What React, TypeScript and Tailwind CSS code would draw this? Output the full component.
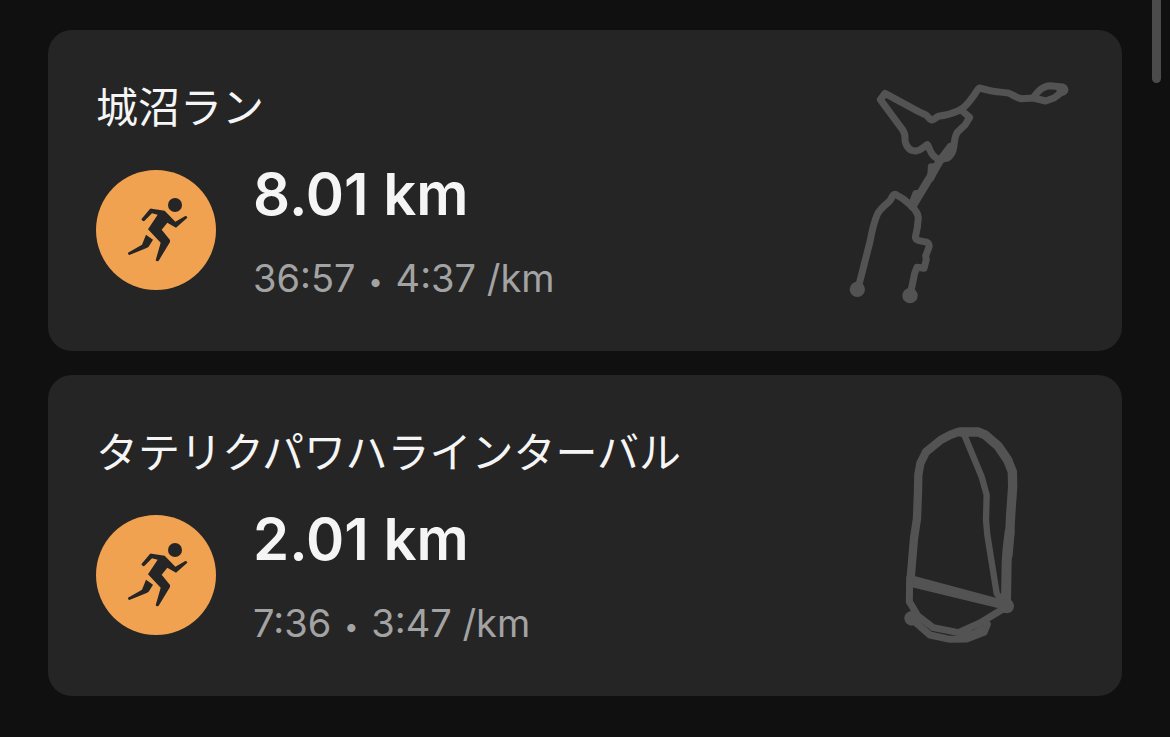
import type { ReactNode } from 'react';

interface Activity {
  id: number;
  title: string;
  distance: string;
  duration: string;
  pace: string;
  route: ReactNode;
}

const LakeRoute = () => (
  <svg viewBox="0 0 720 720" className="h-60 w-60 shrink-0 text-[#535353]" fill="none" stroke="currentColor" strokeWidth="21" strokeLinecap="round" strokeLinejoin="round" aria-hidden="true">
    <path d="M580 82C595 64 607 48 630 47L668 51L674 60L642 84L617 93L580 84L545 86C528 84 518 73 505 69C485 66 465 66 450 62L418 54C410 59 408 70 396 84C380 107 366 118 352 124C330 134 314 137 295 139C286 142 284 149 275 150C267 148 266 140 258 135L236 125L135 70L121 89L187 178C196 190 195 196 195 212C200 234 212 243 228 243C245 240 252 229 262 224C268 232 269 244 277 253C284 262 292 268 303 268" />
    <path d="M362 119L389 142L375 165L352 187C344 198 344 210 342 227C340 246 334 258 322 264L303 268" />
    <path d="M332 230L300 272L217 410" strokeWidth="24" />
    <path d="M274 290L290 290L272 325Z" />
    <path d="M220 392L228 371L236 372" strokeWidth="22" />
    <path d="M217 410L190 387L166 373C154 374 157 386 147 395C136 405 119 417 112 433C102 456 96 482 90 515L58 640" />
    <path d="M217 410C228 423 234 430 235 443L232 472L226 502C229 514 240 512 252 515C262 515 269 521 267 531L257 558L259 568L252 595L231 592L224 610L210 677" />
    <circle cx="667" cy="59" r="18" fill="currentColor" stroke="none" />
    <circle cx="52" cy="658" r="23" fill="currentColor" stroke="none" />
    <circle cx="210" cy="677" r="23" fill="currentColor" stroke="none" />
  </svg>
);

const TrackRoute = () => (
  <svg viewBox="0 0 720 720" className="h-60 w-60 shrink-0 text-[#535353]" fill="none" stroke="currentColor" strokeWidth="19" strokeLinecap="round" strokeLinejoin="round" aria-hidden="true">
    <path d="M375 51L354 51L330 60L302 75L258 111L241 145L235 180L234 230L231 310L222 370L212 490" strokeWidth="25" />
    <path d="M362 51L415 51L436 60L475 94L503 135L517 170L518 215L512 300L509 360L504 420" strokeWidth="28" />
    <path d="M509 350L503 400L500 440L498 560" strokeWidth="30" />
    <path d="M372 58L425 185L440 240L438 315L442 360L470 535L495 570" />
    <path d="M208 487L220 485L500 560L498 582L210 512Z" fill="currentColor" strokeWidth="6" />
    <path d="M209 490L208 560L234 603L280 638L355 653L420 624L495 578" strokeWidth="21" />
    <path d="M215 612L270 660L330 673L380 672L432 652L442 628" strokeWidth="21" />
    <path d="M355 653L400 656L430 640" />
    <circle cx="500" cy="573" r="22" fill="currentColor" stroke="none" />
    <circle cx="215" cy="610" r="22" fill="currentColor" stroke="none" />
  </svg>
);

const RunIcon = () => (
  <div className="h-[120px] w-[120px] shrink-0 rounded-full bg-[#f0a250]">
    <svg viewBox="18 28 360 360" className="h-full w-full" fill="#252525" aria-hidden="true">
      <circle cx="255" cy="133" r="21" />
      <path d="M154 176L179 146Q181 143 185 144L224 150L256 183L286 166Q291 165 292 171L258 201L232 186L215 207L240 238V244L206 300Q201 304 197 299L212 246L174 206L203 162L186 158L163 181Q157 183 154 176Z" />
      <path d="M168 222L189 237L176 258L170 262L118 283Q113 282 114 276L156 252Z" />
    </svg>
  </div>
);

const activities: Activity[] = [
  {
    id: 1,
    title: '城沼ラン',
    distance: '8.01 km',
    duration: '36:57',
    pace: '4:37 /km',
    route: <LakeRoute />,
  },
  {
    id: 2,
    title: 'タテリクパワハラインターバル',
    distance: '2.01 km',
    duration: '7:36',
    pace: '3:47 /km',
    route: <TrackRoute />,
  },
];

function ActivityCard({ activity }: { activity: Activity }) {
  return (
    <article className="flex items-start rounded-3xl bg-[#252525] pt-10 pr-[42px] pb-[41px] pl-12">
      <div className="min-w-0 flex-1 py-2">
        <h2 className="text-[42px] leading-[60px] text-[#f5f5f5]">{activity.title}</h2>
        <div className="mt-5 flex items-center gap-[37px]">
          <RunIcon />
          <div className="flex flex-col gap-6">
            <p className="text-[58px] leading-[72px] font-semibold text-[#f5f5f5]">{activity.distance}</p>
            <p className="text-[38px] leading-[48px] text-[#a3a3a3]">
              {activity.duration} <span className="mx-0.5 align-middle text-[26px] leading-none">•</span> {activity.pace}
            </p>
          </div>
        </div>
      </div>
      {activity.route}
    </article>
  );
}

export default function App() {
  return (
    <div className="relative min-h-screen bg-[#101010] font-['Inter','Noto_Sans_CJK_JP',sans-serif]">
      <main className="flex flex-col gap-6 px-12 pt-[30px] pb-10">
        {activities.map((activity) => (
          <ActivityCard key={activity.id} activity={activity} />
        ))}
      </main>

      {/* Scroll indicator */}
      <div className="absolute top-0 right-[9px] h-[83px] w-[9px] rounded-b-full bg-[#4b4b4b]" />
    </div>
  );
}
